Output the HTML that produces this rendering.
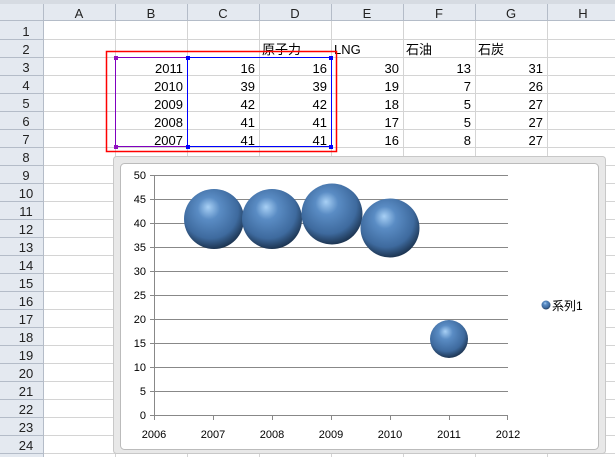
<!DOCTYPE html><html><head><meta charset="utf-8"><style>
body{margin:0;width:615px;height:457px;overflow:hidden;background:#fff;font-family:"Liberation Sans","Noto Sans CJK JP",sans-serif}
svg{display:block}
</style></head><body>
<svg width="615" height="457" xmlns="http://www.w3.org/2000/svg" font-family="Liberation Sans, Noto Sans CJK JP, sans-serif">
<defs>
<radialGradient id="b" cx="0.45" cy="0.38" r="0.62" fx="0.4" fy="0.3">
<stop offset="0" stop-color="#a8d0f5"/><stop offset="0.3" stop-color="#5a8cc4"/><stop offset="0.75" stop-color="#3e6a9e"/><stop offset="1" stop-color="#1d3552"/>
</radialGradient>
</defs>
<rect x="0" y="0" width="615" height="4" fill="#d6dbe2"/>
<rect x="0" y="4" width="615" height="17" fill="#e4e9f0"/>
<rect x="0" y="4" width="44" height="453" fill="#e4e9f0"/>
<g stroke="#d4d4d4" stroke-width="1">
<path d="M115.5 21V457M187.5 21V457M259.5 21V457M331.5 21V457M403.5 21V457M475.5 21V457M547.5 21V457"/>
<path d="M44 39.5H615M44 57.5H615M44 75.5H615M44 93.5H615M44 111.5H615M44 129.5H615M44 147.5H615M44 165.5H615M44 183.5H615M44 201.5H615M44 219.5H615M44 237.5H615M44 255.5H615M44 273.5H615M44 291.5H615M44 309.5H615M44 327.5H615M44 345.5H615M44 363.5H615M44 381.5H615M44 399.5H615M44 417.5H615M44 435.5H615M44 453.5H615"/>
</g>
<g stroke="#b4bcc8"><path d="M43.5 4V457M0 20.5H615M115.5 4V21M187.5 4V21M259.5 4V21M331.5 4V21M403.5 4V21M475.5 4V21M547.5 4V21"/>
<path d="M0 39.5H44M0 57.5H44M0 75.5H44M0 93.5H44M0 111.5H44M0 129.5H44M0 147.5H44M0 165.5H44M0 183.5H44M0 201.5H44M0 219.5H44M0 237.5H44M0 255.5H44M0 273.5H44M0 291.5H44M0 309.5H44M0 327.5H44M0 345.5H44M0 363.5H44M0 381.5H44M0 399.5H44M0 417.5H44M0 435.5H44M0 453.5H44"/></g>
<g font-size="13" fill="#222" text-anchor="middle">
<text x="79" y="18">A</text><text x="151" y="18">B</text><text x="223" y="18">C</text><text x="295" y="18">D</text><text x="367" y="18">E</text><text x="439" y="18">F</text><text x="511" y="18">G</text><text x="583" y="18">H</text>
<text x="26" y="36">1</text><text x="26" y="54">2</text><text x="26" y="72">3</text><text x="26" y="90">4</text><text x="26" y="108">5</text><text x="26" y="126">6</text><text x="26" y="144">7</text><text x="26" y="162">8</text><text x="26" y="180">9</text><text x="26" y="198">10</text><text x="26" y="216">11</text><text x="26" y="234">12</text><text x="26" y="252">13</text><text x="26" y="270">14</text><text x="26" y="288">15</text><text x="26" y="306">16</text><text x="26" y="324">17</text><text x="26" y="342">18</text><text x="26" y="360">19</text><text x="26" y="378">20</text><text x="26" y="396">21</text><text x="26" y="414">22</text><text x="26" y="432">23</text><text x="26" y="450">24</text>
</g>
<g font-size="13" fill="#000">
<text x="262" y="54">原子力</text><text x="334" y="54">LNG</text><text x="406" y="54">石油</text><text x="478" y="54">石炭</text>
</g>
<g font-size="13" fill="#000" text-anchor="end">
<text x="183" y="73">2011</text><text x="255" y="73">16</text><text x="327" y="73">16</text><text x="399" y="73">30</text><text x="471" y="73">13</text><text x="543" y="73">31</text>
<text x="183" y="91">2010</text><text x="255" y="91">39</text><text x="327" y="91">39</text><text x="399" y="91">19</text><text x="471" y="91">7</text><text x="543" y="91">26</text>
<text x="183" y="109">2009</text><text x="255" y="109">42</text><text x="327" y="109">42</text><text x="399" y="109">18</text><text x="471" y="109">5</text><text x="543" y="109">27</text>
<text x="183" y="127">2008</text><text x="255" y="127">41</text><text x="327" y="127">41</text><text x="399" y="127">17</text><text x="471" y="127">5</text><text x="543" y="127">27</text>
<text x="183" y="145">2007</text><text x="255" y="145">41</text><text x="327" y="145">41</text><text x="399" y="145">16</text><text x="471" y="145">8</text><text x="543" y="145">27</text>
</g>
<rect x="106.5" y="51.5" width="230" height="100" fill="none" stroke="#f00" stroke-width="1.5"/>
<rect x="115.5" y="57.5" width="72" height="89" fill="none" stroke="#8000c0"/>
<rect x="187.5" y="57.5" width="144" height="89" fill="none" stroke="#00f"/>
<g fill="#9010c0"><rect x="114" y="56" width="4" height="4"/><rect x="114" y="145" width="4" height="4"/></g>
<g fill="#00f"><rect x="186" y="56" width="4" height="4"/><rect x="186" y="145" width="4" height="4"/><rect x="329" y="56" width="4" height="4"/><rect x="329" y="145" width="4" height="4"/></g>
<rect x="113.5" y="156.5" width="492" height="297" rx="3" fill="#e8e8e8" stroke="#c8c8c8"/>
<rect x="120.5" y="163.5" width="478" height="286" rx="4" fill="#fff" stroke="#bbb"/>
<g stroke="#888" stroke-width="1">
<path d="M154 175.5H508M154 199.5H508M154 223.5H508M154 247.5H508M154 271.5H508M154 295.5H508M154 319.5H508M154 343.5H508M154 367.5H508M154 391.5H508"/>
<path d="M154.5 175V415M150 415.5H508M150 175.5H154M150 199.5H154M150 223.5H154M150 247.5H154M150 271.5H154M150 295.5H154M150 319.5H154M150 343.5H154M150 367.5H154M150 391.5H154"/>
<path d="M154.5 415V420M213.5 415V420M272.5 415V420M331.5 415V420M390.5 415V420M449.5 415V420M507.5 415V420"/>
</g>
<g font-size="11" fill="#000" text-anchor="end">
<text x="146" y="179">50</text><text x="146" y="203">45</text><text x="146" y="227">40</text><text x="146" y="251">35</text><text x="146" y="275">30</text><text x="146" y="299">25</text><text x="146" y="323">20</text><text x="146" y="347">15</text><text x="146" y="371">10</text><text x="146" y="395">5</text><text x="146" y="419">0</text>
</g>
<g font-size="11" fill="#000" text-anchor="middle">
<text x="154" y="438">2006</text><text x="213" y="438">2007</text><text x="272" y="438">2008</text><text x="331" y="438">2009</text><text x="390" y="438">2010</text><text x="449" y="438">2011</text><text x="508" y="438">2012</text>
</g>
<g fill="url(#b)">
<circle cx="214" cy="219" r="30"/><circle cx="272" cy="219" r="30"/><circle cx="332" cy="214" r="30.5"/><circle cx="390" cy="228" r="29.5"/><circle cx="449" cy="339" r="19"/>
<circle cx="546" cy="305" r="4.5"/>
</g>
<text x="552" y="310" font-size="12" fill="#000">系列1</text>
</svg>
</body></html>
